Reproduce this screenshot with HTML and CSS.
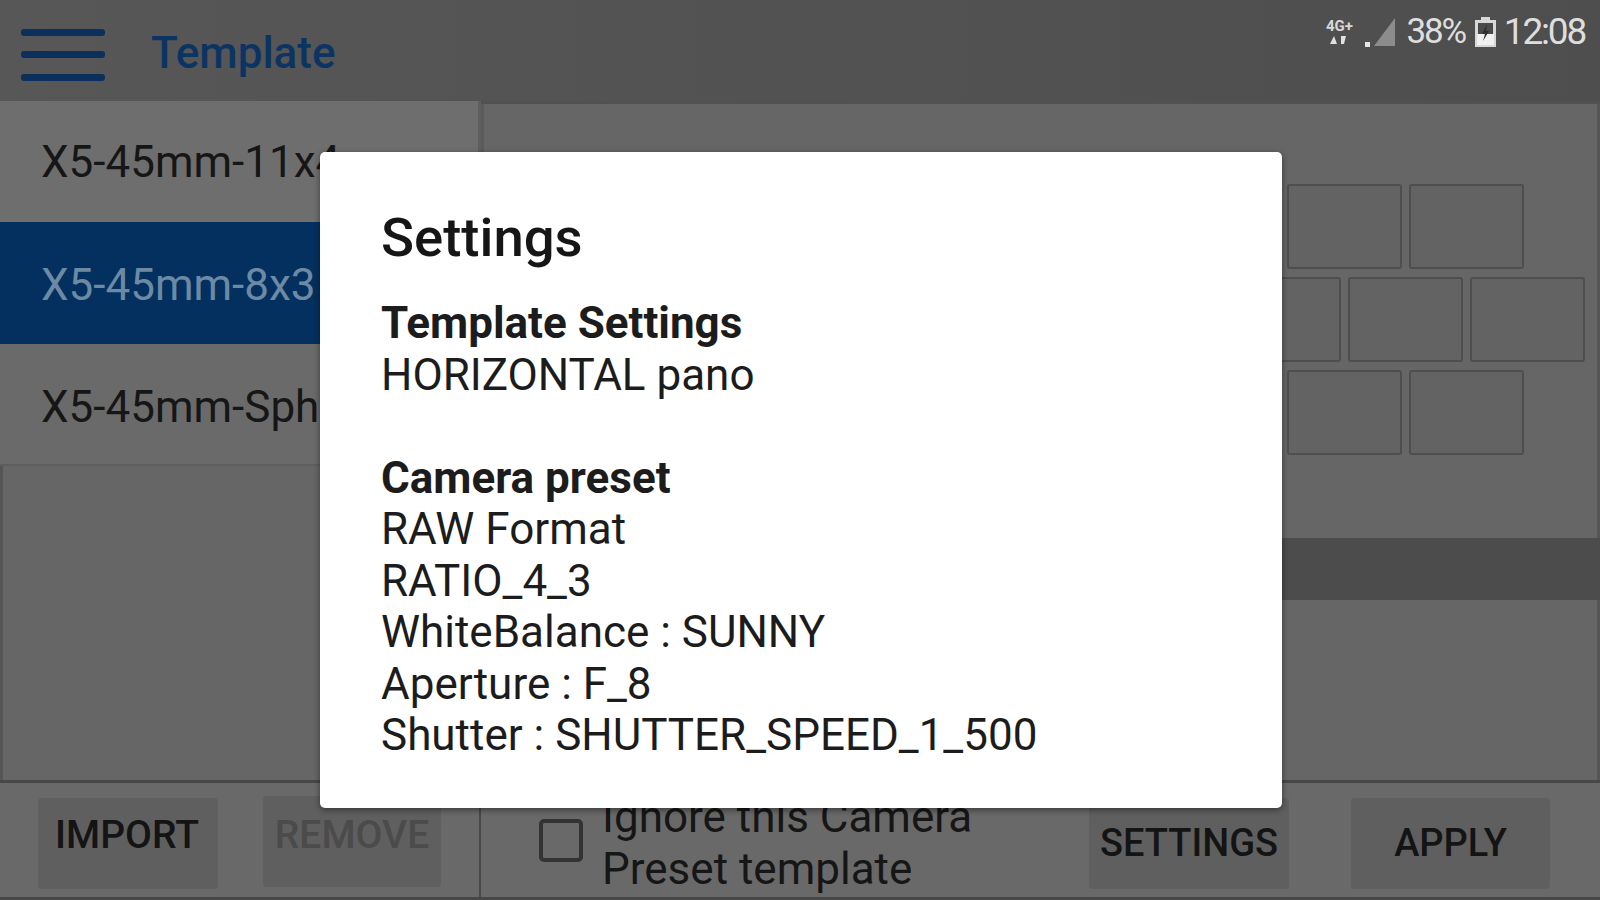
FILE: index.html
```html
<!DOCTYPE html>
<html lang="en">
<head>
<meta charset="utf-8">
<title>Template</title>
<link rel="stylesheet" href="styles.css">
</head>
<body>
<div class="app">
  <header class="topbar">
    <svg class="menu" width="84" height="54" viewBox="0 0 84 54"><rect y="0" width="84" height="7" rx="3"/><rect y="22" width="84" height="7" rx="3"/><rect y="45" width="84" height="7" rx="3"/></svg>
    <h1 class="title">Template</h1>
    <div class="status">
      <span class="net"><span class="net-top">4G+</span><svg width="20" height="9" viewBox="0 0 20 9"><path d="M1 9 5 1l3 8zM12 9V1l5 0-2 8z"/></svg></span>
      <svg class="signal" width="32" height="32" viewBox="0 0 32 32"><path class="sig-dim" d="M30 2v28H9z"/><rect class="sig-on" x="0" y="26" width="5" height="5"/></svg>
      <span class="clock percent">38%</span>
      <svg class="battery" width="21" height="30" viewBox="0 0 21 30"><path class="bat-top" d="M6 0h9v3h6v27H0V3h6z"/><path class="bat-inner" d="M3 6h15v11H3z"/><path class="bat-fill" d="M2 17h17v11H2z"/><path class="bolt" d="M12 7 7 17h3l-2 7 6-10h-3z"/></svg>
      <span class="clock">12:08</span>
    </div>
  </header>
  <main class="main">
    <nav class="list">
      <div class="row row-a">X5-45mm-11x4</div>
      <div class="row row-sel">X5-45mm-8x3</div>
      <div class="row row-c">X5-45mm-Sphere</div>
    </nav>
    <section class="preview">
      <div class="tiles">
        <div class="tile-row"><i></i><i></i><i></i><i></i><i></i><i></i><i></i><i></i></div>
        <div class="tile-row"><i></i><i></i><i></i><i></i><i></i><i></i><i></i><i></i><i></i></div>
        <div class="tile-row"><i></i><i></i><i></i><i></i><i></i><i></i><i></i><i></i></div>
      </div>
      <div class="band"></div>
    </section>
  </main>
  <footer class="bottom">
    <div class="actions-left">
      <button class="btn btn-import">IMPORT</button>
      <button class="btn btn-remove">REMOVE</button>
    </div>
    <div class="actions-right">
      <span class="check"></span>
      <span class="check-label">Ignore this Camera<br>Preset template</span>
      <button class="btn btn-settings">SETTINGS</button>
      <button class="btn btn-apply">APPLY</button>
    </div>
  </footer>
</div>
<div class="dialog">
  <h2 class="dialog-title">Settings</h2>
  <p class="line strong">Template Settings</p>
  <p class="line">HORIZONTAL pano</p>
  <p class="line">&nbsp;</p>
  <p class="line strong">Camera preset</p>
  <p class="line">RAW Format</p>
  <p class="line">RATIO_4_3</p>
  <p class="line">WhiteBalance : SUNNY</p>
  <p class="line">Aperture : F_8</p>
  <p class="line">Shutter : SHUTTER_SPEED_1_500</p>
</div>
</body>
</html>
```
FILE: styles.css
```css
* { box-sizing: border-box; }
html, body { margin: 0; height: 100%; overflow: hidden; }
body { font-family: Roboto, "Liberation Sans", sans-serif; background: #666; color: #161616; position: relative; }

.app { width: 1600px; height: 900px; display: flex; flex-direction: column; }

.topbar { height: 101px; flex: none; background: linear-gradient(90deg, #575757, #525252 50%, #4e4e4e); display: flex; align-items: flex-start; padding: 29px 13px 0 21px; }
.menu { fill: #0d2f5b; flex: none; }
.title { margin: -3px 0 0 46px; font-size: 44px; line-height: 54px; font-weight: 500; color: #0c3463; }
.status { margin-left: auto; margin-top: -17px; display: flex; align-items: center; gap: 6px; color: #dedede; font-size: 37px; line-height: 40px; height: 40px; }
.clock { letter-spacing: -2.2px; margin-right: 2px; }
.percent { font-size: 35px; }
.net { display: flex; flex-direction: column; align-items: center; gap: 1px; width: 34px; color: #d8d8d8; margin-top: -2px; }
.net-top { font-size: 15px; line-height: 15px; font-weight: 700; letter-spacing: 0; }
.net svg { fill: #e0e0e0; display: block; }
.signal { margin: 0 3px 0 3px; }
.sig-dim { fill: #8c8c8c; }
.sig-on { fill: #e6e6e6; }
.battery { flex: none; margin: 0 2px 0 2px; }
.bat-top { fill: #d8d8d8; }
.bat-inner { fill: #4a4a4a; }
.bat-fill { fill: #f0f0f0; }
.bolt { fill: #2e2e2e; }

.main { flex: 1; display: grid; grid-template-columns: 481px 1fr; min-height: 0; background: #515151; border-bottom: 3px solid #474747; }
.list { background: #666; border-left: 3px solid #555; display: flex; flex-direction: column; }
.row { margin-left: -3px; height: 122px; padding-left: 41px; font-size: 44px; line-height: 122px; white-space: nowrap; overflow: hidden; }
.row-a { background: #6e6e6e; height: 121px; border-right: 3px solid #5e5e5e; }
.row-sel { background: #03305f; color: #6d8aa5; line-height: 126px; }
.row-c { background: #6a6a6a; border-bottom: 2px solid #5e5e5e; line-height: 126px; }

.preview { margin-top: 3px; background: #666; border-left: 3px solid #5b5b5b; border-right: 3px solid #555; display: flex; flex-direction: column; }
.tiles { height: 434px; flex: none; padding: 80px 2px 0 0; display: flex; flex-direction: column; align-items: center; gap: 8px; }
.tile-row { display: flex; gap: 7px; }
.tile-row i { display: block; width: 115px; height: 85px; border: 2px solid #4e4e4e; border-radius: 3px; background: #636363; }
.band { height: 62px; flex: none; background: #4c4c4c; margin-right: -3px; }

.bottom { height: 117px; flex: none; background: #696969; display: grid; grid-template-columns: 481px 1fr; border-bottom: 3px solid #474747; }
.actions-left { display: flex; gap: 45px; padding: 15px 0 0 38px; border-right: 2px solid #484848; }
.actions-right { position: relative; display: flex; padding-left: 58px; }
.btn { border: 0; padding: 0; font: 500 38px/1 Roboto, "Liberation Sans", sans-serif; color: #141414; background: #5f5f5f; border-radius: 4px; }
.btn-import { width: 180px; height: 91px; padding: 0 2px 16px 0; font-size: 39px; }
.btn-remove { width: 178px; height: 91px; margin-top: -2px; padding-bottom: 12px; font-size: 39px; color: #4b4b4b; }
.check { width: 44px; height: 43px; margin-top: 36px; border: 4px solid #333; border-radius: 5px; flex: none; }
.check-label { margin: 9px 0 0 19px; font-size: 44px; line-height: 51.5px; white-space: nowrap; width: 487px; flex: none; }
.btn-settings { width: 200px; height: 91px; margin-top: 15px; padding-bottom: 2px; }
.btn-apply { width: 199px; height: 91px; margin: 15px 0 0 62px; padding-bottom: 2px; }

.dialog { position: absolute; left: 320px; top: 152px; width: 962px; height: 656px; padding: 55px 0 0 61px; background: #fff; border-radius: 5px; box-shadow: 0 2px 6px rgba(0,0,0,.45); color: #1c1c1c; }
.dialog-title { margin: 0 0 31px; font-size: 54.5px; line-height: 60px; font-weight: 500; color: #161616; }
.line { margin: 0; font-size: 44px; line-height: 51.5px; white-space: nowrap; }
.strong { font-weight: 700; }
```
